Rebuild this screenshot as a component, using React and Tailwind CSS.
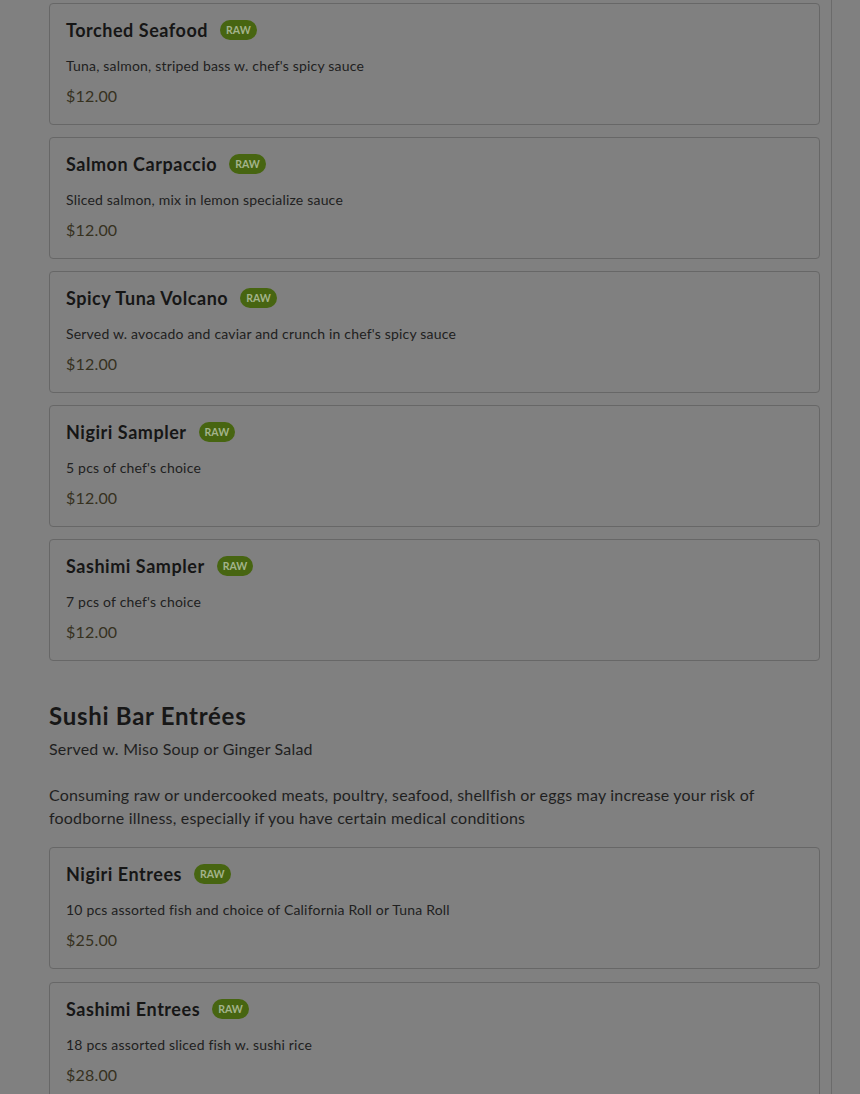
import React from "react";

const SASHIMI = [
  { name: "Torched Seafood", desc: "Tuna, salmon, striped bass w. chef's spicy sauce", price: "$12.00" },
  { name: "Salmon Carpaccio", desc: "Sliced salmon, mix in lemon specialize sauce", price: "$12.00" },
  { name: "Spicy Tuna Volcano", desc: "Served w. avocado and caviar and crunch in chef's spicy sauce", price: "$12.00" },
  { name: "Nigiri Sampler", desc: "5 pcs of chef's choice", price: "$12.00" },
  { name: "Sashimi Sampler", desc: "7 pcs of chef's choice", price: "$12.00" },
];

const ENTREES = [
  { name: "Nigiri Entrees", desc: "10 pcs assorted fish and choice of California Roll or Tuna Roll", price: "$25.00" },
  { name: "Sashimi Entrees", desc: "18 pcs assorted sliced fish w. sushi rice", price: "$28.00" },
];

const MenuCard = ({ item }) => (
  <div className="border border-[#676767] rounded-[4px] px-4 pt-4 pb-4">
    <div className="flex items-center gap-3 h-5">
      <h3 className="text-[18px] font-bold leading-5 tracking-[0.03em] text-[#161616]">{item.name}</h3>
      <span className="bg-[#476511] text-[#a3b38b] text-[10.5px] font-bold rounded-full px-[6px] h-5 leading-5 tracking-normal">
        RAW
      </span>
    </div>
    <p className="mt-4 text-[14px] leading-5 text-[#202020]">{item.desc}</p>
    <p className="mt-2 text-[16px] leading-6 text-[#36311f]">{item.price}</p>
  </div>
);

export default function App() {
  return (
    <div
      className="min-h-screen bg-[#808080] flex tracking-[0.012em]"
      style={{ fontFamily: "Lato, 'Open Sans', sans-serif" }}
    >
      <div className="w-[832px] border-r border-[#6b6b6b] pl-[49px] pr-[11px] pt-[3px]">
        <div className="flex flex-col gap-3">
          {SASHIMI.map((item) => (
            <MenuCard key={item.name} item={item} />
          ))}
        </div>

        <h2 className="mt-[39px] text-[24px] font-bold leading-8 tracking-[0.03em] text-[#171717]">Sushi Bar Entrées</h2>
        <p className="mt-[5px] text-[16px] leading-6 text-[#1f1f1f]">Served w. Miso Soup or Ginger Salad</p>
        <p className="mt-[22px] text-[16px] leading-[23px] text-[#1f1f1f]">
          Consuming raw or undercooked meats, poultry, seafood, shellfish or eggs may increase your risk of
          foodborne illness, especially if you have certain medical conditions
        </p>

        <div className="mt-[18px] flex flex-col gap-[13px]">
          {ENTREES.map((item) => (
            <MenuCard key={item.name} item={item} />
          ))}
        </div>
      </div>
      <div className="flex-1" />
    </div>
  );
}
